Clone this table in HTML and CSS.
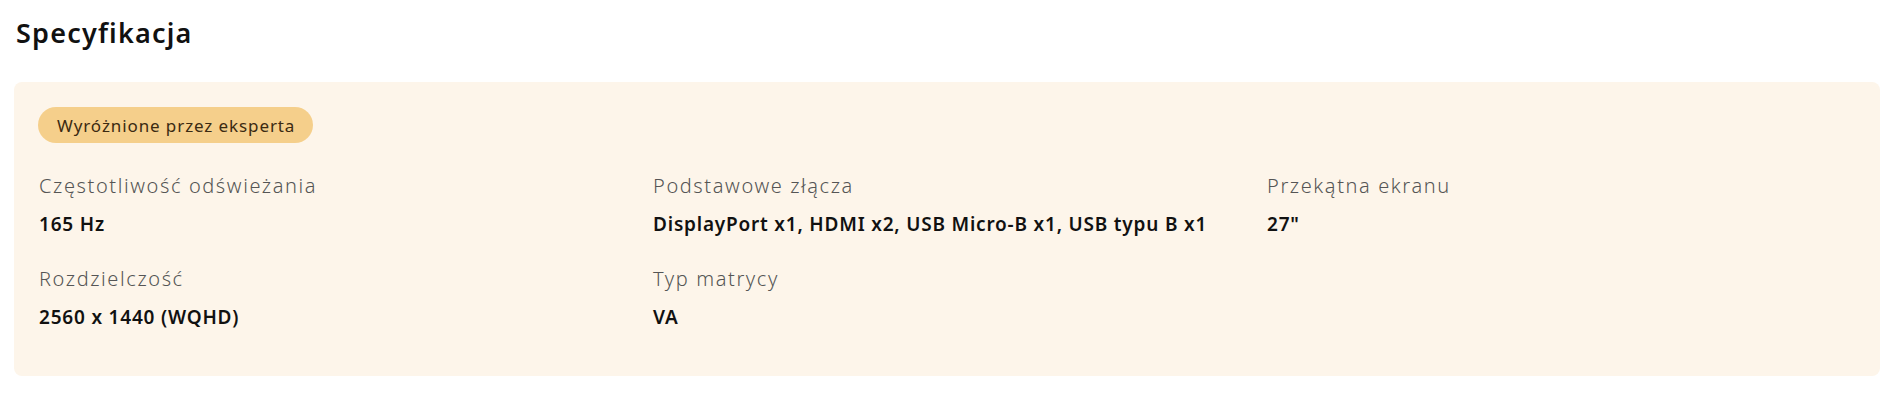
FILE: index.html
```html
<!DOCTYPE html>
<html lang="pl">
<head>
<meta charset="utf-8">
<title>Specyfikacja</title>
<link rel="stylesheet" href="styles.css">
</head>
<body>
<section class="spec">
  <h2 class="spec-title">Specyfikacja</h2>
  <div class="spec-card">
    <span class="badge">Wyróżnione przez eksperta</span>
    <dl class="spec-grid">
      <div class="spec-item">
        <dt class="spec-label">Częstotliwość odświeżania</dt>
        <dd class="spec-value">165 Hz</dd>
      </div>
      <div class="spec-item">
        <dt class="spec-label">Podstawowe złącza</dt>
        <dd class="spec-value">DisplayPort x1, HDMI x2, USB Micro-B x1, USB typu B x1</dd>
      </div>
      <div class="spec-item">
        <dt class="spec-label">Przekątna ekranu</dt>
        <dd class="spec-value">27"</dd>
      </div>
      <div class="spec-item">
        <dt class="spec-label">Rozdzielczość</dt>
        <dd class="spec-value">2560 x 1440 (WQHD)</dd>
      </div>
      <div class="spec-item">
        <dt class="spec-label">Typ matrycy</dt>
        <dd class="spec-value">VA</dd>
      </div>
    </dl>
  </div>
</section>
</body>
</html>
```
FILE: styles.css
```css
* { box-sizing: border-box; }

html, body {
  margin: 0;
  background: #ffffff;
}

body {
  font-family: "Noto Sans", "Open Sans", sans-serif;
  color: #111111;
}

.spec {
  padding: 17px 23px 0 14px;
}

.spec-title {
  margin: 0 0 33px 2px;
  font-size: 27px;
  line-height: 32px;
  font-weight: 600;
  letter-spacing: 1.2px;
  color: #111111;
}

.spec-card {
  background: #fdf5ea;
  border-radius: 8px;
  padding: 25px 25px 45px 24px;
}

.badge {
  display: inline-flex;
  align-items: center;
  height: 36px;
  padding: 0 18px 0 19px;
  border-radius: 18px;
  background: #f5cf8b;
  color: #3b2a12;
  font-size: 17px;
  font-weight: 400;
  letter-spacing: 0.9px;
}

.spec-grid {
  margin: 29px 0 0 1px;
  display: grid;
  grid-template-columns: repeat(3, 1fr);
  column-gap: 26px;
  row-gap: 27px;
}

.spec-item {
  display: flex;
  flex-direction: column;
  gap: 10px;
}

.spec-label {
  margin: 0;
  font-size: 20px;
  line-height: 28px;
  font-weight: 300;
  letter-spacing: 1.6px;
  color: #555555;
}

.spec-value {
  margin: 0;
  font-size: 19px;
  line-height: 28px;
  font-weight: 600;
  letter-spacing: 0.8px;
  color: #111111;
}
```
